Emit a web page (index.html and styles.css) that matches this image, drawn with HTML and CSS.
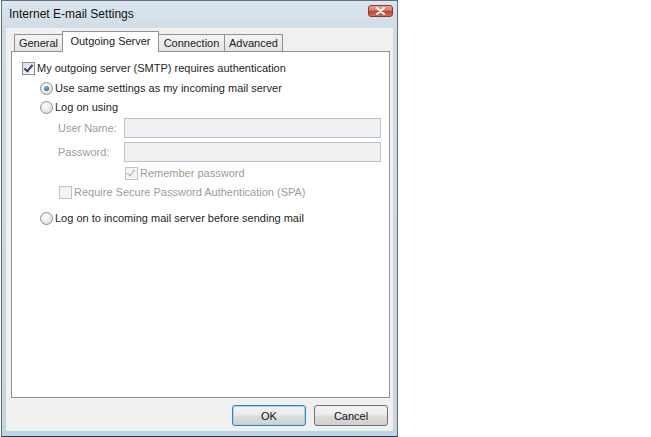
FILE: index.html
```html
<!DOCTYPE html>
<html lang="en">
<head>
  <meta charset="UTF-8" />
  <title>Internet E-mail Settings</title>
  <link rel="stylesheet" href="styles.css">
</head>
<body>

  <div class="window">
    <div class="titlebar">
      <span class="title">Internet E-mail Settings</span>
      <span class="close">
        <svg width="11" height="8" viewBox="0 0 11 8">
          <path d="M2 1 L9 7 M9 1 L2 7" stroke="#fff" stroke-width="2.2" stroke-linecap="round"/>
        </svg>
      </span>
    </div>

    <div class="client">
      <div class="tabs">
        <div class="tab tab-general">General</div>
        <div class="tab tab-outgoing active">Outgoing Server</div>
        <div class="tab tab-connection">Connection</div>
        <div class="tab tab-advanced">Advanced</div>
      </div>

      <div class="panel">
        <div class="row row-auth">
          <span class="check on"></span>
          <span>My outgoing server (SMTP) requires authentication</span>
        </div>

        <div class="row row-same">
          <span class="radio on"></span>
          <span>Use same settings as my incoming mail server</span>
        </div>

        <div class="row row-logon">
          <span class="radio"></span>
          <span>Log on using</span>
        </div>

        <div class="field field-user">
          <label>User Name:</label>
          <div class="input"></div>
        </div>

        <div class="field field-pass">
          <label>Password:</label>
          <div class="input"></div>
        </div>

        <div class="row row-remember disabled">
          <span class="check on dim"></span>
          <span>Remember password</span>
        </div>

        <div class="row row-spa disabled">
          <span class="check dim"></span>
          <span>Require Secure Password Authentication (SPA)</span>
        </div>

        <div class="row row-before">
          <span class="radio"></span>
          <span>Log on to incoming mail server before sending mail</span>
        </div>
      </div>

      <div class="buttons">
        <button class="btn default">OK</button>
        <button class="btn">Cancel</button>
      </div>
    </div>
  </div>

</body>
</html>
```

FILE: styles.css
```css
body {
  margin: 0;
  padding: 0;
  background: #fff;
  font-family: 'Liberation Sans', Arial, sans-serif;
  font-size: 11px;
  color: #1e1e1e;
}

.window {
  margin-left: 1px;
  width: 395px;
  height: 435px;
  border: 1px solid #5e6e7c;
  border-bottom-color: #1f3c4c;
  background: linear-gradient(to bottom, #dbe5ee, #cfdbe6 30px, #c8d5e1);
  display: flex;
  flex-direction: column;
}

.titlebar {
  height: 27px;
  display: flex;
  align-items: flex-start;
  justify-content: space-between;
  padding: 0 4px 0 7px;
}

.title {
  font-size: 12px;
  color: #111;
  margin-top: 6px;
}

.close {
  width: 23px;
  height: 10px;
  margin-top: 4px;
  border: 1px solid #7a3f36;
  border-radius: 3px;
  background: linear-gradient(to bottom, #e9a99c, #d9735f 45%, #c2422b 55%, #d86a52);
  display: flex;
  align-items: center;
  justify-content: center;
}

.client {
  flex: 1;
  margin: 0 4px 3px 4px;
  background: #f0f0f0;
  border-bottom: 2px solid #a9dbe8;
  display: flex;
  flex-direction: column;
  padding: 3px 5px 0 5px;
}

.tabs {
  display: flex;
  align-items: flex-end;
  height: 20px;
  padding-left: 3px;
  position: relative;
  z-index: 1;
}

.tab {
  height: 16px;
  border: 1px solid #8d9298;
  border-bottom: none;
  border-right: none;
  background: linear-gradient(to bottom, #f4f4f4, #e3e3e3);
  line-height: 17px;
  text-align: center;
  color: #222;
}

.tab-general { width: 47px; }
.tab-outgoing { width: 95px; }
.tab-connection { width: 65px; }
.tab-advanced { width: 57px; border-right: 1px solid #8d9298; }

.tab.active {
  height: 20px;
  margin-bottom: -1px;
  background: #fff;
  border-right: 1px solid #8d9298;
  line-height: 19px;
}

.tab.active + .tab {
  border-left: none;
}

.panel {
  height: 345px;
  background: #fff;
  border: 1px solid #8d9298;
  width: 377px;
}

.row {
  display: flex;
  align-items: center;
  height: 16px;
  white-space: nowrap;
}

.row-auth { margin: 8px 0 0 10px; }
.row-same { margin: 4px 0 0 28px; }
.row-logon { margin: 3px 0 0 28px; }
.row-remember { margin: 3px 0 0 113px; }
.row-spa { margin: 3px 0 0 47px; }
.row-before { margin: 10px 0 0 28px; }

.disabled {
  color: #9c9c9c;
}

.check {
  width: 11px;
  height: 11px;
  border: 1px solid #8e8f8f;
  background: linear-gradient(135deg, #dcdcdc, #fbfbfb);
  margin-right: 2px;
  position: relative;
  flex: none;
}

.check.on::after {
  content: "";
  position: absolute;
  left: 3px;
  top: 0px;
  width: 3px;
  height: 7px;
  border: solid #34466e;
  border-width: 0 2px 2px 0;
  transform: rotate(40deg);
}

.check.dim {
  border-color: #c2c2c2;
  background: #f4f4f4;
}

.check.dim.on::after {
  border-color: #a9a9a9;
  border-width: 0 1px 1px 0;
}

.radio {
  width: 11px;
  height: 11px;
  border: 1px solid #909090;
  border-radius: 50%;
  background: radial-gradient(circle at 40% 35%, #fff, #d6d6d6);
  margin-right: 2px;
  position: relative;
  flex: none;
}

.radio.on::after {
  content: "";
  position: absolute;
  left: 3px;
  top: 3px;
  width: 5px;
  height: 5px;
  border-radius: 50%;
  background: radial-gradient(circle at 40% 35%, #7ab6ee, #1c4f86);
}

.field {
  display: flex;
  align-items: center;
  height: 20px;
  margin-left: 46px;
  color: #9c9c9c;
}

.field label {
  width: 66px;
}

.field-user { margin-top: 3px; }
.field-pass { margin-top: 4px; }

.input {
  width: 255px;
  height: 18px;
  border: 1px solid #b5c3d3;
  background: #f0f0f0;
}

.buttons {
  display: flex;
  justify-content: flex-end;
  gap: 8px;
  margin-top: 7px;
}

.btn {
  width: 74px;
  height: 21px;
  font-family: inherit;
  font-size: 11px;
  color: #111;
  border: 1px solid #707070;
  border-radius: 3px;
  background: linear-gradient(to bottom, #f3f3f3, #ebebeb 48%, #dddddd 52%, #cfcfcf);
  padding: 0;
}

.btn.default {
  border-color: #3c7fb1;
  box-shadow: inset 0 0 0 1px #9fd6f0;
}
```
